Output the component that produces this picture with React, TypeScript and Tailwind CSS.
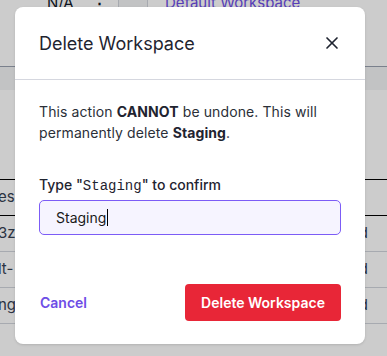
import React from "react";
import { X } from "lucide-react";

const rows = [
  { left: "esp", right: "", line: "border-black" },
  { left: "3zt", right: "ed", line: "border-gray-300" },
  { left: "lt-", right: "ed", line: "border-gray-300" },
  { left: "ng", right: "ed", line: "border-gray-300" },
];

const App: React.FC = () => {
  return (
    <div
      className="relative h-[356px] w-[387px] overflow-hidden bg-white"
      style={{ fontFamily: "Inter, 'Noto Sans', sans-serif" }}
    >
      {/* Page behind the dialog */}
      <div className="flex h-[67px] items-start border-b border-gray-400 text-[15px]">
        <div className="flex w-[118px] items-start pl-[47px] -mt-[8px]">
          <span className="text-gray-900">N/A</span>
          <span className="ml-[18px] font-bold text-gray-900">⋮</span>
        </div>
        <div className="h-full w-[30px] border-x border-gray-300 bg-gray-100" />
        <div className="-mt-[8px] pl-[17px] text-[#6d4de6] underline">Default Workspace</div>
      </div>
      <div className="h-[23px] bg-gray-100" />
      <div className="h-[89px]" />
      <div className="border-t border-black">
        {rows.map((r, i) => (
          <div
            key={i}
            className={`flex h-[36px] items-center justify-between border-b text-[15px] text-gray-700 ${
              i === 0 ? "border-black" : "border-gray-300"
            }`}
          >
            <span className="-ml-[2px]">{r.left}</span>
            <span className="pr-[19px]">{r.right}</span>
          </div>
        ))}
      </div>

      {/* Overlay */}
      <div className="absolute inset-0 bg-black/20" />

      {/* Dialog */}
      <div className="absolute left-[15px] top-[7px] flex h-[337px] w-[350px] flex-col rounded-lg bg-white shadow-sm">
        <div className="flex h-[73px] items-center justify-between border-b border-[#d5d7df] pl-[24px] pr-[23px]">
          <h2 className="text-[18px] text-[#1f2430]">Delete Workspace</h2>
          <button className="flex h-[20px] w-[20px] items-center justify-center text-[#1f2430]">
            <X size={20} strokeWidth={2} />
          </button>
        </div>

        <div className="flex flex-1 flex-col px-[24px] pt-[21px]">
          <p className="text-[14px] leading-[21px] tracking-[0.1px] text-[#2b2f38]">
            This action <strong className="font-bold text-[#1f2430]">CANNOT</strong> be undone. This will
            permanently delete <strong className="font-bold text-[#1f2430]">Staging</strong>.
          </p>

          <label className="mt-[32px] text-[14px] font-medium leading-[20px] text-[#1f2430]">
            Type "<span style={{ fontFamily: "'Liberation Mono', 'DejaVu Sans Mono', monospace" }} className="font-normal">Staging</span>" to confirm
          </label>
          <div className="mt-[4px] flex h-[35px] w-[302px] items-center rounded-[5px] border border-[#7c5cf6] bg-[#f6f4ff] pl-[16px] text-[14px] text-[#1a1a1a]">
            <span>Staging</span>
            <span className="ml-[1px] h-[17px] w-[1px] bg-black" />
          </div>

          <div className="mt-[49px] flex items-center justify-between">
            <button className="pl-[1px] text-[14px] font-semibold text-[#6d4de6]">Cancel</button>
            <button className="h-[37px] w-[156px] rounded-[4px] bg-[#e82637] text-[14px] font-semibold text-white">
              Delete Workspace
            </button>
          </div>
        </div>
      </div>
    </div>
  );
};

export default App;
